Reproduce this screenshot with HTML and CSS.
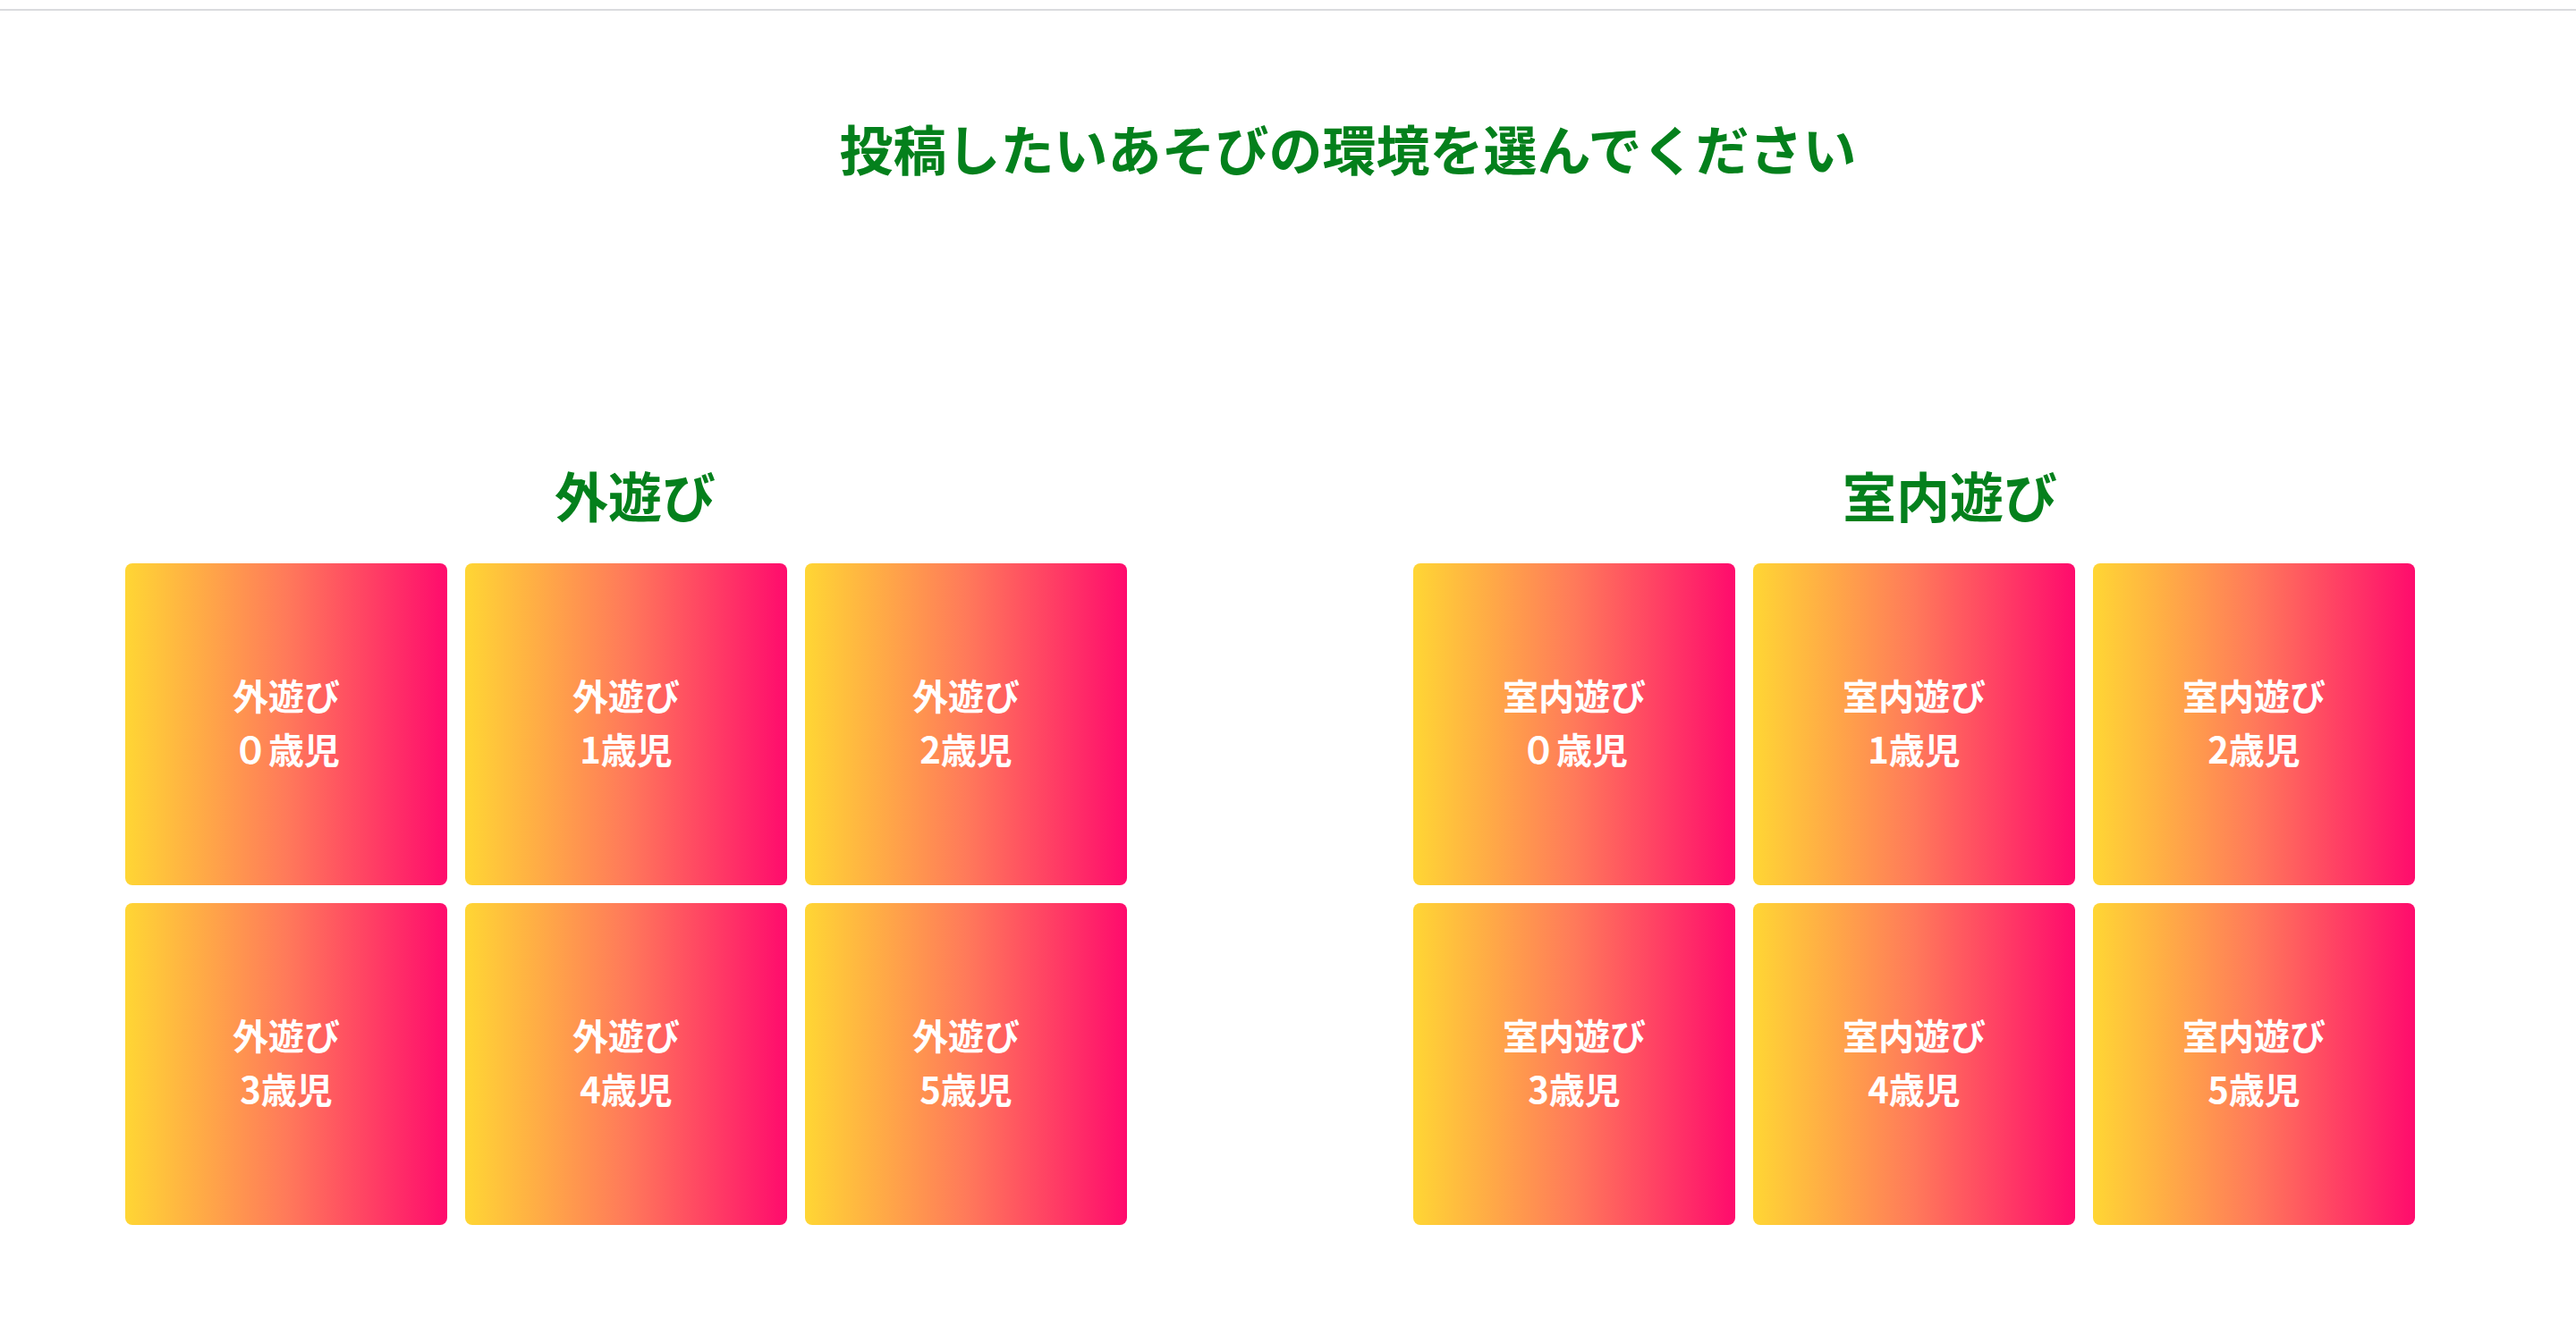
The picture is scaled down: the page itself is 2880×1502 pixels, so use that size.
FILE: index.html
```html
<!DOCTYPE html>
<html lang="ja">
<head>
<meta charset="utf-8">
<title>あそびの環境を選ぶ</title>
<link rel="stylesheet" href="styles.css">
</head>
<body>
<header class="topbar"></header>
<main class="page">
  <h1 class="title">投稿したいあそびの環境を選んでください</h1>
  <div class="sections">
    <section class="section">
      <h2 class="section-title">外遊び</h2>
      <div class="grid">
        <a class="card">外遊び<br>０歳児</a>
        <a class="card">外遊び<br>1歳児</a>
        <a class="card">外遊び<br>2歳児</a>
        <a class="card">外遊び<br>3歳児</a>
        <a class="card">外遊び<br>4歳児</a>
        <a class="card">外遊び<br>5歳児</a>
      </div>
    </section>
    <section class="section">
      <h2 class="section-title">室内遊び</h2>
      <div class="grid">
        <a class="card">室内遊び<br>０歳児</a>
        <a class="card">室内遊び<br>1歳児</a>
        <a class="card">室内遊び<br>2歳児</a>
        <a class="card">室内遊び<br>3歳児</a>
        <a class="card">室内遊び<br>4歳児</a>
        <a class="card">室内遊び<br>5歳児</a>
      </div>
    </section>
  </div>
</main>
</body>
</html>
```
FILE: styles.css
```css
html, body {
  margin: 0;
  padding: 0;
  background: #ffffff;
}

body {
  font-family: "Noto Sans CJK JP", "Noto Sans", sans-serif;
}

.topbar {
  height: 10px;
  border-bottom: 2px solid #dadbde;
}

.title {
  margin: 0;
  padding: 108px 0 0 134px;
  font-size: 60px;
  line-height: 90px;
  font-weight: 700;
  color: #04801c;
  text-align: center;
}

.sections {
  display: flex;
  gap: 320px;
  margin-top: 298px;
  padding-left: 140px;
}

.section-title {
  margin: 0 0 32px 0;
  padding-left: 480px;
  font-size: 60px;
  line-height: 90px;
  font-weight: 700;
  color: #04801c;
}

.grid {
  display: grid;
  grid-template-columns: repeat(3, 360px);
  grid-auto-rows: 360px;
  gap: 20px;
}

.card {
  display: flex;
  align-items: center;
  justify-content: center;
  box-sizing: border-box;
  padding-bottom: 6px;
  text-align: center;
  border-radius: 8px;
  background: linear-gradient(to right, #ffd634 0%, #ff7a5a 50%, #ff0b6d 100%);
  color: #ffffff;
  font-size: 40px;
  line-height: 60px;
  font-weight: 700;
  text-decoration: none;
}
```
